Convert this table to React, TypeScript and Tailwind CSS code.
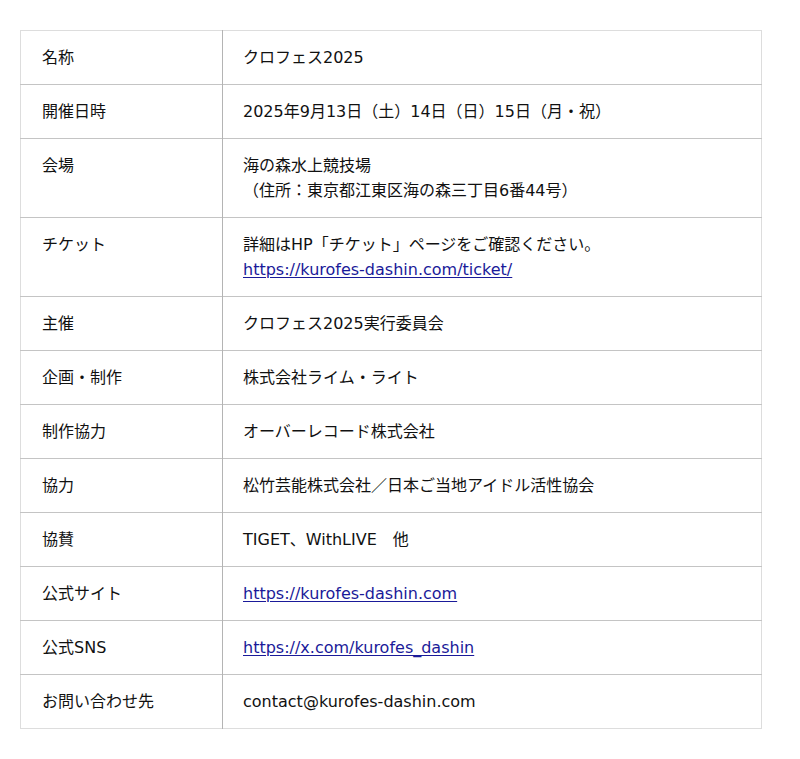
import React from 'react';

type Row = { label: string; lines: React.ReactNode[] };

const link = (href: string) => (
  <a href={href} className="text-[#1a1a99] underline underline-offset-2">
    {href}
  </a>
);

const rows: Row[] = [
  { label: '名称', lines: ['クロフェス2025'] },
  { label: '開催日時', lines: ['2025年9月13日（土）14日（日）15日（月・祝）'] },
  { label: '会場', lines: ['海の森水上競技場', '（住所：東京都江東区海の森三丁目6番44号）'] },
  { label: 'チケット', lines: ['詳細はHP「チケット」ページをご確認ください。', link('https://kurofes-dashin.com/ticket/')] },
  { label: '主催', lines: ['クロフェス2025実行委員会'] },
  { label: '企画・制作', lines: ['株式会社ライム・ライト'] },
  { label: '制作協力', lines: ['オーバーレコード株式会社'] },
  { label: '協力', lines: ['松竹芸能株式会社／日本ご当地アイドル活性協会'] },
  { label: '協賛', lines: ['TIGET、WithLIVE　他'] },
  { label: '公式サイト', lines: [link('https://kurofes-dashin.com')] },
  { label: '公式SNS', lines: [link('https://x.com/kurofes_dashin')] },
  { label: 'お問い合わせ先', lines: ['contact@kurofes-dashin.com'] },
];

export default function App() {
  return (
    <div
      className="min-h-screen bg-white pt-[30px] pl-[20px] text-[16px] text-[#111]"
      style={{ fontFamily: '"DejaVu Sans", "Noto Sans CJK JP", sans-serif' }}
    >
      <table className="w-[742px] border-collapse border border-[#dddddd]">
        <tbody>
          {rows.map((r, i) => (
            <tr key={i} className="border-b border-[#c4c4c4] last:border-[#dddddd]">
              <th className="w-[202px] border-r border-[#b4b4b4] px-[21px] py-[14px] text-left align-top font-normal leading-[25px]">
                {r.label}
              </th>
              <td className="px-[20px] py-[14px] align-top leading-[25px]">
                {r.lines.map((l, j) => (
                  <div key={j}>{l}</div>
                ))}
              </td>
            </tr>
          ))}
        </tbody>
      </table>
    </div>
  );
}
